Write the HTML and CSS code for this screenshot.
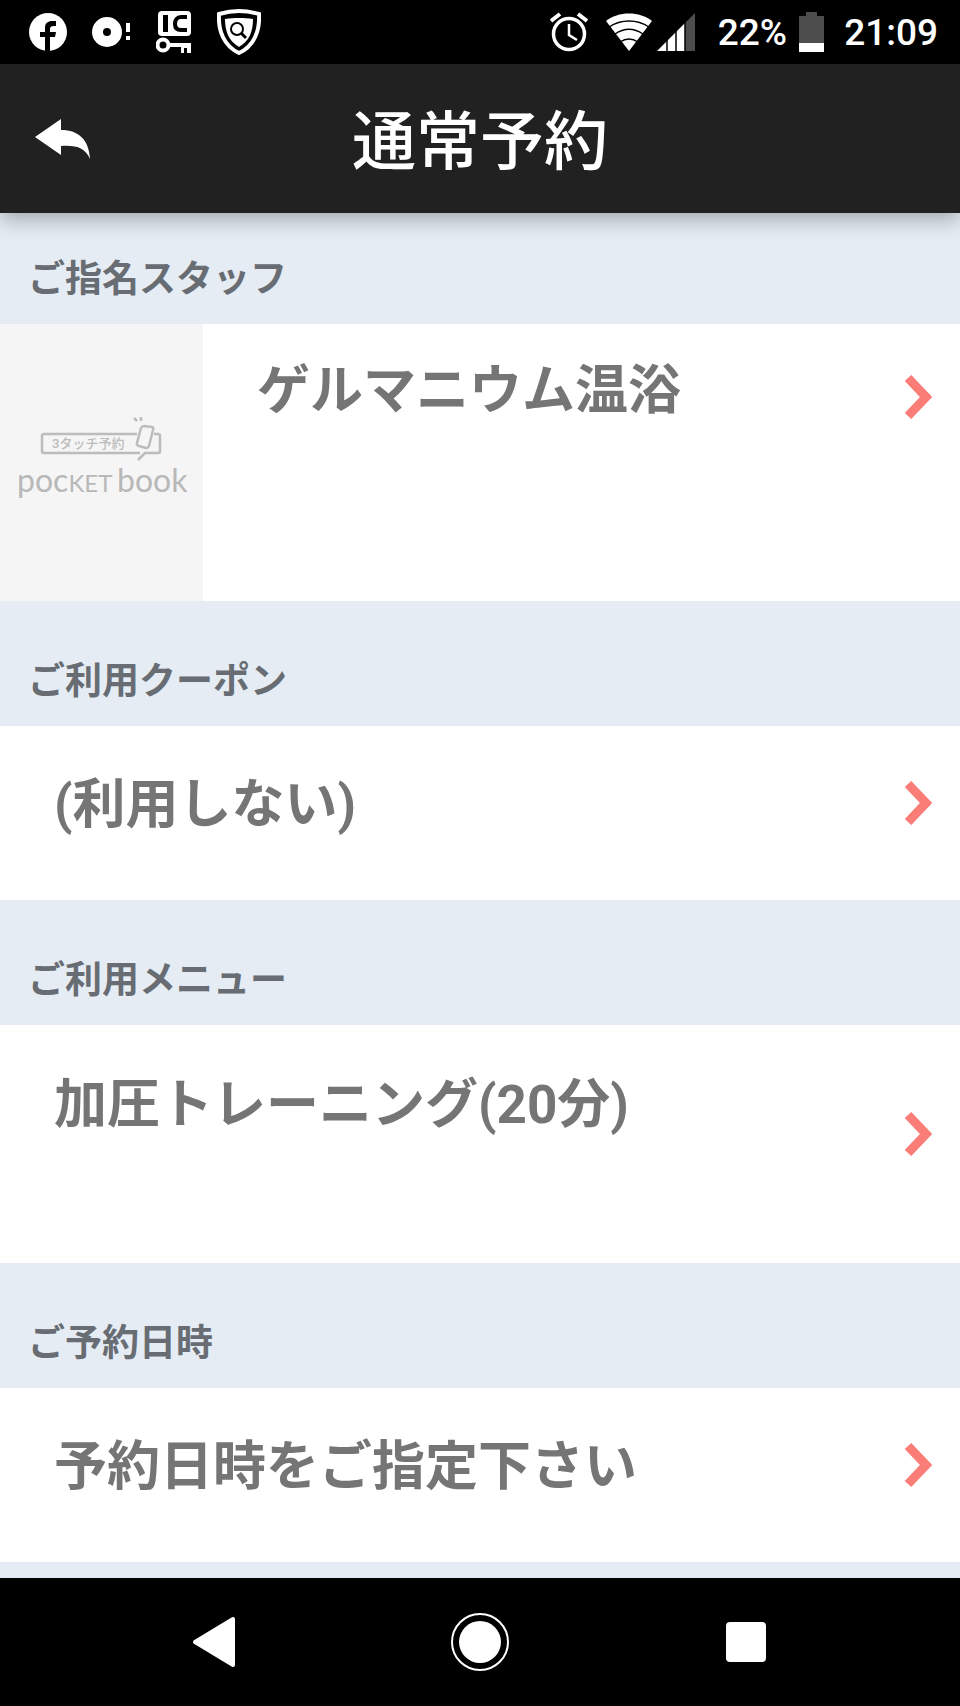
FILE: index.html
```
<!DOCTYPE html>
<html lang="ja">
<head>
    <meta charset="UTF-8">
    <meta name="viewport" content="width=device-width, initial-scale=1.0">
    <title>通常予約</title>
    <link rel="stylesheet" href="styles.css">
</head>
<body>
    <div class="status-bar">
        <div class="notifications">
            <svg width="38" height="38" viewBox="0 0 38 38">
                <circle cx="19" cy="19" r="19" fill="#fff"/>
                <path d="M16 38V24h-5v-5h5v-4c0-5 3-7 7-7h4v5h-2c-3 0-4 1-4 3v3h6l-1 5h-5v14z" fill="#000"/>
            </svg>
            <svg width="39" height="38" viewBox="0 0 39 38">
                <circle cx="15" cy="19" r="15" fill="#fff"/>
                <circle cx="15" cy="19" r="4" fill="#000"/>
                <path d="M34 10h4v9h-4zM34 23h4v4h-4z" fill="#fff"/>
            </svg>
            <svg width="36" height="42" viewBox="0 0 36 42">
                <rect x="2" y="0" width="33" height="25" rx="4" fill="#fff"/>
                <path d="M9.500 4v17" stroke="#000" stroke-width="5"/>
                <path d="M31 6h-6c-4 0-6 3-6 7s2 6 6 6h6" fill="none" stroke="#000" stroke-width="4"/>
                <circle cx="7" cy="34" r="5.500" fill="none" stroke="#fff" stroke-width="4"/>
                <path d="M13 32h22v10h-4v-5h-3v5h-3v-6H13z" fill="#fff"/>
            </svg>
            <svg width="44" height="46" viewBox="0 0 44 46">
                <path d="M22 2c7 0 13 1 20 3 1 17-5 32-20 39C7 37 1 22 2 5c7-2 13-3 20-3z" fill="#000" stroke="#fff" stroke-width="4"/>
                <path d="M22 9c5 0 9 0 14 1 0 13-4 22-14 28C12 32 8 23 8 10c5-1 9-1 14-1z" fill="#fff"/>
                <circle cx="20" cy="20" r="6" fill="none" stroke="#000" stroke-width="2"/>
                <path d="M24 24l5 5" stroke="#000" stroke-width="3"/>
            </svg>
        </div>
        <div class="device-state">
            <svg class="alarm" width="38" height="40" viewBox="0 0 38 40">
                <g fill="none" stroke="#fff" stroke-width="4">
                    <circle cx="19" cy="22" r="15.500" stroke-width="3.500"/>
                    <path d="M1 9l9-7M28 2l9 7"/>
                    <path d="M19 12v11l8 5" stroke-width="2.500"/>
                </g>
            </svg>
            <svg class="wifi" width="46" height="38" viewBox="0 0 46 38">
                <path d="M23 38L0 8C12-2 34-2 46 8z" fill="#fff"/>
                <path d="M3 14c12-8 28-8 40 0M9 21c9-6 19-6 28 0M14 29c6-4 12-4 18 0" fill="none" stroke="#000" stroke-width="1.500"/>
            </svg>
            <svg class="signal" width="38" height="38" viewBox="0 0 38 38">
                <path d="M28 10L38 0v38H28z" fill="#4d4d4d"/>
                <path d="M0 38l28-28v28z" fill="#fff"/>
                <path d="M10 24v14M19 14v24M28 6v32" stroke="#000" stroke-width="1.500"/>
            </svg>
            <span class="percent">22%</span>
            <svg class="battery" width="25" height="40" viewBox="0 0 25 40">
                <path d="M0 4h7V0h11v4h7v27H0z" fill="#4d4d4d"/>
                <path d="M0 31h25v9H0z" fill="#fff"/>
            </svg>
            <span class="clock">21:09</span>
        </div>
    </div>

    <header>
        <a class="back" href="#" aria-label="戻る">
            <svg width="56" height="40" viewBox="0 0 56 40">
                <path d="M0 18L26 0v11c18 0 28 10 29 29-5-11-13-14-29-13v9z" fill="#fff"/>
            </svg>
        </a>
        <h1>通常予約</h1>
    </header>

    <main>
        <section>
            <h2>ご指名スタッフ</h2>
            <a class="row staff" href="#">
                <svg class="photo" viewBox="0 0 203 277">
                    <g fill="none" stroke="#bcbcbc" stroke-width="2.500">
                        <path d="M137 110H44q-2 0-2 2v15q0 2 2 2h96M154 110h4q2 0 2 2v15q0 2-2 2h-13l-7 7"/>
                        <path d="M144 102l8 1q2 0 1 3l-4 16q-1 2-3 2l-7-2q-3-1-2-3l4-15q1-2 3-2z"/>
                        <path d="M134 94l3 3M141 93v4"/>
                    </g>
                    <text class="logo-sub" x="52" y="124">3タッチ予約</text>
                    <text class="logo" x="17" y="168">poc<tspan class="logo-small">KET</tspan></text>
                    <text class="logo" x="117" y="168">book</text>
                </svg>
                <span class="label">ゲルマニウム温浴</span>
                <svg class="chevron" width="28" height="46" viewBox="0 0 28 46">
                    <path d="M4 4l18 19L4 42" fill="none" stroke="#fb7d77" stroke-width="9"/>
                </svg>
            </a>
        </section>

        <section>
            <h2>ご利用クーポン</h2>
            <a class="row" href="#">
                <span class="label">(利用しない)</span>
                <svg class="chevron" width="28" height="46" viewBox="0 0 28 46">
                    <path d="M4 4l18 19L4 42" fill="none" stroke="#fb7d77" stroke-width="9"/>
                </svg>
            </a>
        </section>

        <section>
            <h2>ご利用メニュー</h2>
            <a class="row menu" href="#">
                <span class="label">加圧トレーニング(20分)</span>
                <svg class="chevron" width="28" height="46" viewBox="0 0 28 46">
                    <path d="M4 4l18 19L4 42" fill="none" stroke="#fb7d77" stroke-width="9"/>
                </svg>
            </a>
        </section>

        <section>
            <h2>ご予約日時</h2>
            <a class="row" href="#">
                <span class="label">予約日時をご指定下さい</span>
                <svg class="chevron" width="28" height="46" viewBox="0 0 28 46">
                    <path d="M4 4l18 19L4 42" fill="none" stroke="#fb7d77" stroke-width="9"/>
                </svg>
            </a>
        </section>
    </main>

    <nav>
        <button type="button" aria-label="戻る">
            <svg width="44" height="52" viewBox="0 0 44 52">
                <path d="M3 26L41 3v46z" fill="#fff" stroke="#fff" stroke-width="4" stroke-linejoin="round"/>
            </svg>
        </button>
        <button type="button" aria-label="ホーム">
            <svg width="58" height="58" viewBox="0 0 58 58">
                <circle cx="29" cy="29" r="28" fill="none" stroke="#fff" stroke-width="2"/>
                <circle cx="29" cy="29" r="21" fill="#fff"/>
            </svg>
        </button>
        <button type="button" aria-label="履歴">
            <svg width="40" height="40" viewBox="0 0 40 40">
                <rect width="40" height="40" rx="4" fill="#fff"/>
            </svg>
        </button>
    </nav>
</body>
</html>
```

FILE: styles.css
```
* {
    box-sizing: border-box;
}

body {
    font-family: Roboto, "Noto Sans CJK JP", sans-serif;
    margin: 0;
    min-height: 100vh;
    display: flex;
    flex-direction: column;
    background-color: #e5ecf4;
    color: #757575;
}

svg {
    display: block;
    flex: none;
}

.status-bar {
    height: 64px;
    padding: 0 22px 0 29px;
    display: flex;
    align-items: center;
    justify-content: space-between;
    background-color: #000;
    color: #fff;
    font-size: 37px;
    font-weight: 500;
    line-height: 48px;
}

.notifications {
    display: flex;
    align-items: center;
    gap: 25px;
}

.device-state {
    display: flex;
    align-items: center;
}

.wifi {
    margin-left: 18px;
}

.signal {
    margin-left: 5px;
}

.percent,
.clock {
    padding-top: 2px;
}

.percent {
    margin-left: 23px;
}

.battery {
    margin: 0 20px 0 12px;
}

header {
    position: relative;
    height: 149px;
    padding: 0 35px;
    display: grid;
    grid-template-columns: 1fr auto 1fr;
    align-items: center;
    background-color: #212121;
    color: #fff;
    box-shadow: 0 6px 20px rgba(0, 0, 0, 0.3);
}

.back {
    justify-self: start;
}

h1 {
    margin: 0;
    padding-top: 8px;
    font-size: 64px;
    font-weight: 500;
    line-height: 80px;
}

main {
    flex: 1;
}

h2 {
    margin: 0;
    padding: 55px 28px 18px;
    font-size: 37px;
    font-weight: 700;
    line-height: 52px;
    color: #686d73;
}

section:first-child h2 {
    padding-top: 41px;
}

.row {
    min-height: 174px;
    padding: 0 28px 20px 54px;
    display: flex;
    align-items: center;
    justify-content: space-between;
    background-color: #fff;
    color: inherit;
    text-decoration: none;
}

.label {
    flex: 1;
    padding-top: 4px;
    font-size: 53px;
    font-weight: 700;
    line-height: 72px;
}

.menu {
    min-height: 238px;
}

.menu .label {
    align-self: flex-start;
    margin-top: 40px;
}

.staff {
    padding: 0 28px 0 0;
    align-items: flex-start;
}

.staff .label {
    margin: 27px 0 0 54px;
}

.staff .chevron {
    margin-top: 50px;
}

.photo {
    width: 203px;
    background-color: #f5f5f5;
}

.logo {
    font-family: Lato, sans-serif;
    font-size: 32px;
    fill: #b8b8b8;
}

.logo-small {
    font-size: 24px;
}

.logo-sub {
    font-size: 13px;
    font-weight: 500;
    fill: #bcbcbc;
}

nav {
    height: 128px;
    display: flex;
    align-items: center;
    justify-content: center;
    gap: 166px;
    background-color: #000;
}

nav button {
    width: 100px;
    height: 100px;
    padding: 0;
    display: flex;
    align-items: center;
    justify-content: center;
    background: none;
    border: none;
    cursor: pointer;
}
```
